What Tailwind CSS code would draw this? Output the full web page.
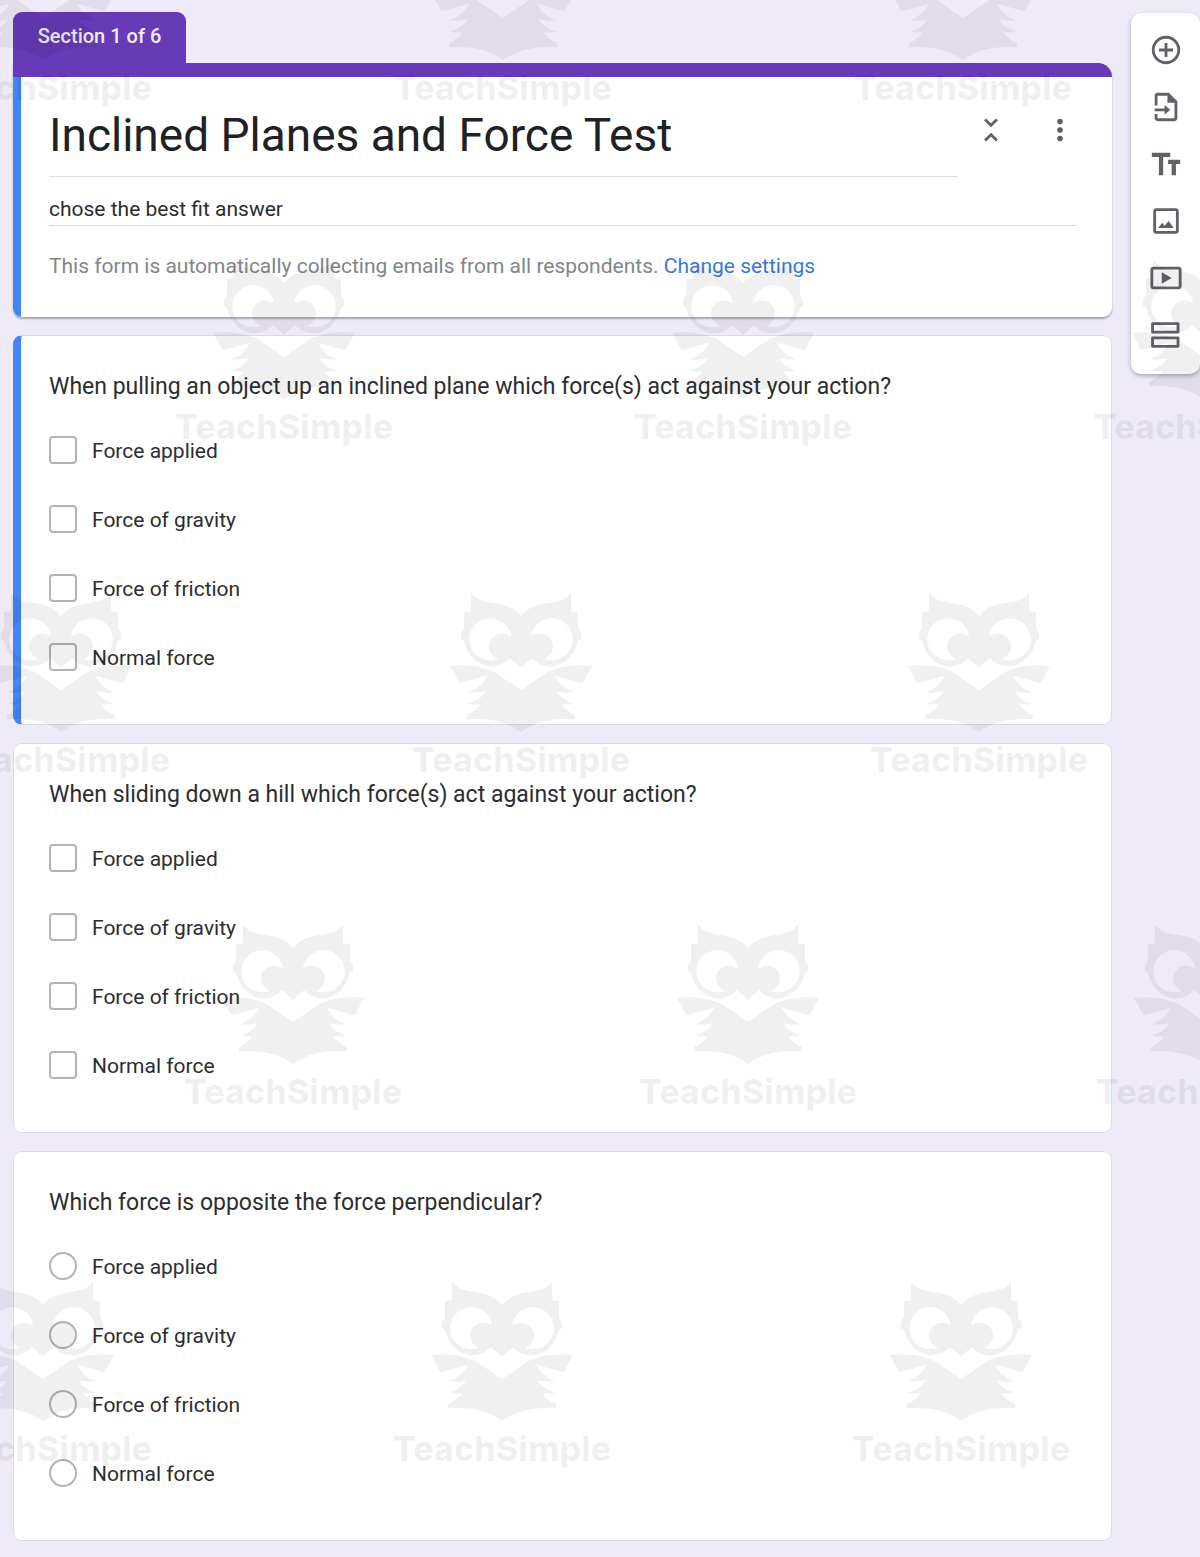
<!DOCTYPE html>
<html lang="en">
<head>
  <meta charset="UTF-8" />
  <title>Inclined Planes and Force Test</title>
  <meta name="viewport" content="width=device-width, initial-scale=1.0">
  <script src="https://cdn.jsdelivr.net/npm/@tailwindcss/browser@4"></script>
</head>
<body class="relative min-h-screen overflow-x-hidden bg-[#eeeaf8] font-['Roboto',sans-serif] text-[#2c2d30]">

<!-- shared shapes -->
<svg class="hidden">
  <symbol id="owl" viewBox="0 0 450 435">
    <path fill-rule="evenodd" d="M75 8C95 35 130 36 150 40Q203 48 225 78Q247 48 300 40C320 36 355 35 375 8L376 64L396 66L396 115Q410 130 405 148L396 152C385 205 340 232 308 229Q275 226 259 205L243 217L225 234L207 217L191 205Q175 226 142 229C110 232 65 205 54 152L45 148Q40 130 54 115L54 66L74 64ZM195 138A63 63 0 1 0 157 206A36 36 0 1 1 178 132ZM255 138A63 63 0 1 1 293 206A36 36 0 1 0 272 132Z" />
    <path d="M12 228C60 222 105 228 145 245L225 300L305 245C345 228 390 222 438 228L410 280Q360 266 327 257Q342 290 384 307Q352 311 333 304Q342 328 384 341Q362 345 346 343Q358 362 387 376L387 388Q280 382 225 427Q170 382 63 388L63 376Q92 362 104 343Q88 345 66 341Q108 328 117 304Q98 311 66 307Q108 290 123 257Q90 266 40 280Z" />
  </symbol>
</svg>

<div class="flex items-start gap-[19px] pt-3 pb-4 pl-[13px]">
  <main class="min-w-0 flex-1">
    <div class="flex h-[51px] w-[173px] justify-center rounded-t-[9px] bg-[#673ab7] pt-2 text-[20px] leading-8 font-medium text-[#f3eef9]">Section 1 of 6</div>

    <form class="flex flex-col gap-[18px]">
      <section class="overflow-hidden rounded-b-[9px] rounded-tr-[14px] bg-white shadow-[0_2px_2px_#a9a6b4]">
        <div class="h-[14px] bg-[#673ab7]"></div>
        <div class="border-l-8 border-[#4285f4] pt-[27px] pr-[35px] pb-[35px] pl-7">
          <div class="flex">
            <input type="text" aria-label="Form title" value="Inclined Planes and Force Test" class="h-[73px] min-w-0 flex-1 border-b border-[#dadce0] pb-2.5 text-[46px] text-[#202124] outline-none">
            <button type="button" aria-label="Collapse section" class="mt-[9px] ml-4 flex size-[34px] items-center justify-center self-start">
              <svg class="size-[34px] fill-none stroke-[#5f6368] stroke-2" viewBox="0 0 24 24"><path d="M7.8 4.6L12 8.6L16.2 4.6M7.8 19.4L12 15.4L16.2 19.4" /></svg>
            </button>
            <button type="button" aria-label="More options" class="mt-[9px] ml-[35px] flex size-[34px] items-center justify-center self-start">
              <svg class="size-[34px] fill-[#5f6368]" viewBox="0 0 24 24"><circle cx="12" cy="6" r="2" /><circle cx="12" cy="12" r="2" /><circle cx="12" cy="18" r="2" /></svg>
            </button>
          </div>
          <input type="text" aria-label="Form description" value="chose the best fit answer" class="mt-[15px] h-[34px] w-full border-b border-[#dadce0] text-[21px] outline-none">
          <p class="mt-6 text-[21px] leading-8 text-[#80868b]">This form is automatically collecting emails from all respondents. <a href="#" class="text-[#3c78d8]">Change settings</a></p>
        </div>
      </section>

      <fieldset class="rounded-[9px] border border-l-8 border-[#dadce0] border-l-[#4285f4] bg-white pr-[35px] pb-[53px] pl-7">
        <legend class="float-left mt-[35px] mb-[33px] w-full text-[23px] leading-8">When pulling an object up an inclined plane which force(s) act against your action?</legend>
        <div class="clear-both flex flex-col gap-[41px]">
          <label class="flex h-7 items-center gap-[15px] text-[21px]"><input type="checkbox" class="size-7 appearance-none rounded-[4px] border-2 border-[#b3b3b3]"><span class="pt-1">Force applied</span></label>
          <label class="flex h-7 items-center gap-[15px] text-[21px]"><input type="checkbox" class="size-7 appearance-none rounded-[4px] border-2 border-[#b3b3b3]"><span class="pt-1">Force of gravity</span></label>
          <label class="flex h-7 items-center gap-[15px] text-[21px]"><input type="checkbox" class="size-7 appearance-none rounded-[4px] border-2 border-[#b3b3b3]"><span class="pt-1">Force of friction</span></label>
          <label class="flex h-7 items-center gap-[15px] text-[21px]"><input type="checkbox" class="size-7 appearance-none rounded-[4px] border-2 border-[#b3b3b3]"><span class="pt-1">Normal force</span></label>
        </div>
      </fieldset>

      <fieldset class="rounded-[9px] border border-[#dadce0] bg-white px-[35px] pb-[53px]">
        <legend class="float-left mt-[35px] mb-[33px] w-full text-[23px] leading-8">When sliding down a hill which force(s) act against your action?</legend>
        <div class="clear-both flex flex-col gap-[41px]">
          <label class="flex h-7 items-center gap-[15px] text-[21px]"><input type="checkbox" class="size-7 appearance-none rounded-[4px] border-2 border-[#b3b3b3]"><span class="pt-1">Force applied</span></label>
          <label class="flex h-7 items-center gap-[15px] text-[21px]"><input type="checkbox" class="size-7 appearance-none rounded-[4px] border-2 border-[#b3b3b3]"><span class="pt-1">Force of gravity</span></label>
          <label class="flex h-7 items-center gap-[15px] text-[21px]"><input type="checkbox" class="size-7 appearance-none rounded-[4px] border-2 border-[#b3b3b3]"><span class="pt-1">Force of friction</span></label>
          <label class="flex h-7 items-center gap-[15px] text-[21px]"><input type="checkbox" class="size-7 appearance-none rounded-[4px] border-2 border-[#b3b3b3]"><span class="pt-1">Normal force</span></label>
        </div>
      </fieldset>

      <fieldset class="rounded-[9px] border border-[#dadce0] bg-white px-[35px] pb-[53px]">
        <legend class="float-left mt-[35px] mb-[33px] w-full text-[23px] leading-8">Which force is opposite the force perpendicular?</legend>
        <div class="clear-both flex flex-col gap-[41px]">
          <label class="flex h-7 items-center gap-[15px] text-[21px]"><input type="radio" name="q3" class="size-7 appearance-none rounded-full border-2 border-[#b3b3b3]"><span class="pt-1">Force applied</span></label>
          <label class="flex h-7 items-center gap-[15px] text-[21px]"><input type="radio" name="q3" class="size-7 appearance-none rounded-full border-2 border-[#b3b3b3]"><span class="pt-1">Force of gravity</span></label>
          <label class="flex h-7 items-center gap-[15px] text-[21px]"><input type="radio" name="q3" class="size-7 appearance-none rounded-full border-2 border-[#b3b3b3]"><span class="pt-1">Force of friction</span></label>
          <label class="flex h-7 items-center gap-[15px] text-[21px]"><input type="radio" name="q3" class="size-7 appearance-none rounded-full border-2 border-[#b3b3b3]"><span class="pt-1">Normal force</span></label>
        </div>
      </fieldset>
    </form>
  </main>

  <!-- toolbar -->
  <aside class="mt-px flex w-[69px] shrink-0 flex-col items-center gap-[23px] rounded-[10px] bg-white pt-5 pb-[22px] shadow-[0_2px_4px_#aaa7b5]">
    <button type="button" aria-label="Add question">
      <svg class="block size-[34px] fill-none stroke-[#5f6368] stroke-2" viewBox="0 0 24 24"><circle cx="12" cy="12" r="9" /><path d="M12 7v10M7 12h10" /></svg>
    </button>
    <button type="button" aria-label="Import questions">
      <svg class="block size-[34px] fill-[#5f6368]" viewBox="0 0 24 24"><path d="M14 2H6C4.9 2 4 2.9 4 4v7h2V4h7v5h5v11H6v-3H4v3c0 1.100.9 2 2 2h12c1.100 0 2-.9 2-2V8z" /><path d="M4 13h7v-2.500l4 3.500l-4 3.500V15H4z" /></svg>
    </button>
    <button type="button" aria-label="Add title and description">
      <svg class="block size-[34px] fill-[#5f6368]" viewBox="0 0 24 24"><path d="M2 4h13v3h-5v13H7V7H2zM13.500 9H22v3h-3v8h-3v-8h-2.500z" /></svg>
    </button>
    <button type="button" aria-label="Add image">
      <svg class="block size-[34px] fill-[#5f6368]" viewBox="0 0 24 24"><path fill-rule="evenodd" d="M5 3h14c1.100 0 2 .9 2 2v14c0 1.100-.9 2-2 2H5c-1.100 0-2-.9-2-2V5c0-1.100.9-2 2-2zM5 5v14h14V5z" /><path d="M6.500 17L9.300 13.300L11 15.400L13.900 12L17.500 17z" /></svg>
    </button>
    <button type="button" aria-label="Add video">
      <svg class="block size-[34px] fill-[#5f6368]" viewBox="0 0 24 24"><path fill-rule="evenodd" d="M3 4h18c1.100 0 2 .9 2 2v12c0 1.100-.9 2-2 2H3c-1.100 0-2-.9-2-2V6c0-1.100.9-2 2-2zM3 6v12h18V6z" /><path d="M9 8v8l7-4z" /></svg>
    </button>
    <button type="button" aria-label="Add section">
      <svg class="block size-[34px] fill-none stroke-[#5f6368] stroke-2" viewBox="0 0 24 24"><path stroke-linejoin="round" d="M2.500 4h18v6h-18zM2.500 14h18v6h-18z" /></svg>
    </button>
  </aside>
</div>

<!-- watermark layer over the whole page -->
<div id="watermarks" class="pointer-events-none absolute inset-0 overflow-hidden" aria-hidden="true"></div>

<script>
  // centre x and top y of every stamp
  const stamps = [
    [43, -82], [503, -82], [963, -82],
    [284, 257], [743, 257], [1203, 257],
    [61, 590], [521, 590], [979, 590],
    [293, 922], [748, 922], [1205, 922],
    [43, 1279], [502, 1279], [961, 1279]
  ];

  document.getElementById("watermarks").innerHTML = stamps.map(([x, y]) => `
    <div class="absolute flex w-60 -translate-x-1/2 flex-col items-center text-black/6" style="left:${x}px;top:${y}px">
      <svg class="h-[145px] w-[150px] fill-current"><use href="#owl" /></svg>
      <span class="font-['Inter',sans-serif] text-[34px] leading-[50px] font-extrabold">TeachSimple</span>
    </div>`).join("");
</script>
</body>
</html>
